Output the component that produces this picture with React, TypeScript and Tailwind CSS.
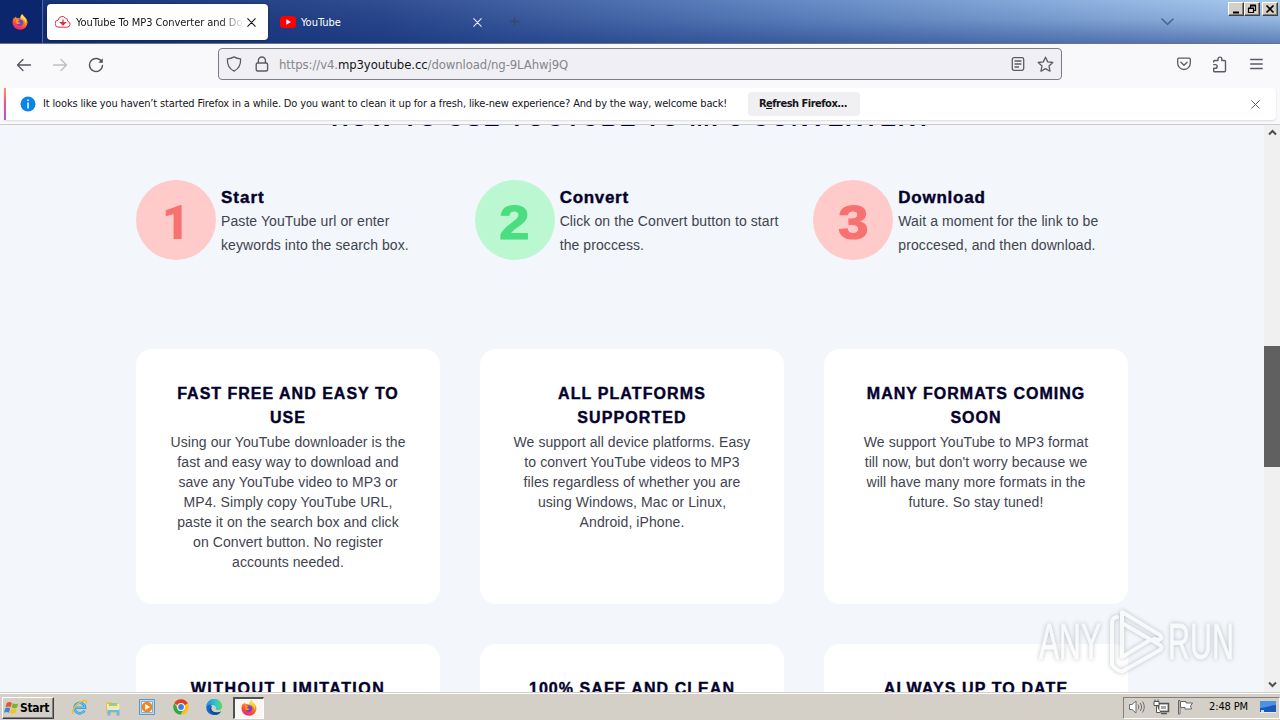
import type { ReactNode } from "react";

const UI = "font-['DejaVu_Sans_Condensed','DejaVu_Sans',sans-serif]";

function FirefoxLogo({ id, size }: { id: string; size: number }) {
  return (
    <svg width={size} height={size} viewBox="0 0 16 16">
      <defs>
        <linearGradient id={id} x1="0.8" y1="0" x2="0.3" y2="1">
          <stop offset="0" stopColor="#ffe14a" />
          <stop offset="0.4" stopColor="#ff8a1e" />
          <stop offset="0.75" stopColor="#ff4040" />
          <stop offset="1" stopColor="#e0208a" />
        </linearGradient>
      </defs>
      <path d="M10.2.3c.6 1.3 1.600 1.900 2.700 2.900 1.400 1.200 2.600 2.900 2.600 5.300A7.500 7.300 0 0 1 .5 8.600C.5 6.500 1 4.900 2.200 3.300l.5 1.100 1-1.900 1.200 1.700c1.500-.3 2.700-.1 3.500.4C8.300 2.700 9 1.200 10.200.3z" fill={`url(#${id})`} />
      <path d="M4.800 5.900c1.500-1.100 4.500-.8 6.100.9 1 1.600.5 4.200-1.400 5-2 .8-4.200-.1-4.800-1.900 1 .6 2 .4 2.900-.3-1.300-.2-2.500-.8-2.500-1.700.4-.5 1.200-.6 2-.6-.4-.8-1.200-1.300-2.300-1.400z" fill="#7a3fd0" />
      <path d="M4.300 5.500c1.300-.4 2.700.3 3.200 1.300-.8.200-1.700.3-2 .9.500.7 1.900.6 3 1-.8 1.400-2.500 1.800-3.900 1-.6-1.200-.8-2.900-.3-4.200z" fill="#ff9a22" />
      <path d="M10.200.3c.6 1.500 3 2.900 3.700 5.200.4 1.500.2 3-.2 4C13.700 6.800 12 5 8.600 4.200 8.600 2.600 9 1.200 10.200.3z" fill="#ffdd3c" />
    </svg>
  );
}

function Close({ color, size = 9, w = 1.2 }: { color: string; size?: number; w?: number }) {
  return (
    <svg width={size} height={size} viewBox="0 0 10 10" stroke={color} strokeWidth={w} strokeLinecap="round">
      <path d="M.8.8l8.400 8.400M9.200.8L.8 9.200" />
    </svg>
  );
}

function WinButton({ children, className = "" }: { children: ReactNode; className?: string }) {
  return (
    <div className={`flex h-[14px] w-4 items-center justify-center border border-t-white border-l-white border-r-[#404040] border-b-[#404040] bg-[#d4d0c8] shadow-[inset_-1px_-1px_0_#808080] ${className}`}>
      {children}
    </div>
  );
}

function TitleBar() {
  return (
    <div className="flex h-11 shrink-0 border-b border-[#6a7287] bg-[linear-gradient(to_bottom,rgba(255,255,255,0.03),rgba(20,40,110,0.12)_45%,rgba(15,45,120,0.48)),linear-gradient(to_right,#0d2a72,#2a488e_30%,#6086c2_62%,#a6caf0)]">
      <div className="flex w-[43px] items-center border-r border-[#5168a0] bg-[#0b266c] pl-3">
        <FirefoxLogo id="ff-title" size={16} />
      </div>
      <div className="mt-1 ml-1 flex h-9 w-[221px] items-center rounded-[4px] bg-white pr-[11px] pl-2 shadow-[0_0_3px_rgba(0,0,0,0.4)]">
        <svg width="16" height="14" viewBox="0 0 16 14" fill="none" stroke="#d9303e" strokeWidth="1">
          <path d="M4 12.200h8.200a3 3 0 0 0 .6-5.900 3.100 3.100 0 0 0-2.300-3.200A4 4 0 0 0 3.300 5 3.600 3.600 0 0 0 4 12.200z" />
          <path d="M8 4.500v5M5.800 7.700L8 9.900l2.200-2.200z" fill="#d9303e" strokeWidth="1.300" />
        </svg>
        <div className={`mt-[3px] ml-[5px] w-[168px] overflow-hidden text-[11px] tracking-[-0.06px] whitespace-nowrap text-[#15141a] [mask-image:linear-gradient(to_right,#000_86%,transparent)] ${UI}`}>
          YouTube To MP3 Converter and Download
        </div>
        <div className="ml-[3px] shrink-0">
          <Close color="#15141a" />
        </div>
      </div>
      <div className="flex h-11 w-[214px] items-center pl-3">
        <svg width="16" height="12" viewBox="0 0 16 12">
          <rect width="16" height="12" rx="3.500" fill="#f00" />
          <path d="M6.300 3.300v5.400L11 6z" fill="#fff" />
        </svg>
        <div className={`mt-[3px] ml-[5px] flex-1 text-[11px] text-white ${UI}`}>YouTube</div>
        <Close color="#e8ecf6" size={9} />
      </div>
      <div className="flex flex-1 items-center pl-[27px]">
        <svg width="11" height="11" viewBox="0 0 11 11" stroke="#38476f" strokeWidth="1.300">
          <path d="M5.500 1v9M1 5.500h9" />
        </svg>
        <svg className="ml-[641px]" width="13" height="8" viewBox="0 0 13 8" fill="none" stroke="#4b668f" strokeWidth="1.600" strokeLinecap="round">
          <path d="M1 1l5.500 5.300L12 1" />
        </svg>
      </div>
      <div className="flex pt-0.5 pr-0.5">
        <WinButton>
          <svg width="10" height="10" viewBox="0 0 10 10"><path d="M2 7.500h6v2H2z" /></svg>
        </WinButton>
        <WinButton>
          <svg width="10" height="10" viewBox="0 0 10 10" fill="none" stroke="#000">
            <path d="M3 1h6M3 1.800h5.500v4.700H7M3.500 2v2M1 4h6M1.500 4.500h5v4h-5z" strokeWidth="1.200" />
          </svg>
        </WinButton>
        <WinButton className="ml-[2px]">
          <svg width="10" height="10" viewBox="0 0 10 10" stroke="#000" strokeWidth="1.700"><path d="M1.500 1.500l7 7M8.500 1.500l-7 7" /></svg>
        </WinButton>
      </div>
    </div>
  );
}

function NavBar() {
  return (
    <div className="flex h-11 shrink-0 items-center bg-[#f9f9fb] pb-1 text-[#5b5b66]">
      <svg className="mt-px ml-4" width="16" height="16" viewBox="0 0 16 16" fill="none" stroke="#55555f" strokeWidth="1.300" strokeLinecap="round" strokeLinejoin="round">
        <path d="M14.500 8H1.500M7 2.500L1.500 8 7 13.500" />
      </svg>
      <svg className="mt-px ml-5" width="16" height="16" viewBox="0 0 16 16" fill="none" stroke="#bdbdc4" strokeWidth="1.300" strokeLinecap="round" strokeLinejoin="round">
        <path d="M1.500 8h13M9 2.500L14.500 8 9 13.500" />
      </svg>
      <svg className="mt-px ml-5" width="16" height="16" viewBox="0 0 16 16" fill="none" stroke="#55555f" strokeWidth="1.400" strokeLinecap="round">
        <path d="M13.800 5A6.500 6.500 0 1 0 14.500 8.500" />
        <path d="M14.800 1.300v4.500h-4.500z" fill="#55555f" stroke="none" />
      </svg>
      <div className="ml-[114px] flex h-8 w-[844px] items-center rounded-[4px] border border-[#7d7d88] bg-[#f0f0f4] pl-[7px]">
        <svg width="16" height="16" viewBox="0 0 16 16" fill="none" stroke="#5b5b66" strokeWidth="1.300" strokeLinejoin="round">
          <path d="M8 .9c2.200 1.300 4.300 1.800 6.600 2 .3 5.400-1.700 9.800-6.600 12.200C3.100 12.700 1.100 8.300 1.400 2.900 3.700 2.700 5.800 2.200 8 .9z" />
        </svg>
        <svg className="ml-3" width="16" height="16" viewBox="0 0 16 16" fill="none" stroke="#5b5b66" strokeWidth="1.400">
          <rect x="2.200" y="7" width="11.400" height="8" rx="1.500" />
          <path d="M4.400 7V4.500a3.500 3.500 0 0 1 7 0V7" />
        </svg>
        <div className={`mt-px ml-[9px] flex-1 text-[13px] leading-4 tracking-[-0.1px] whitespace-nowrap text-[#85858c] ${UI}`}>
          https://v4.<span className="text-[#15141a]">mp3youtube.cc</span>/download/ng-9LAhwj9Q
        </div>
        <svg width="14" height="16" viewBox="0 0 14 16" fill="none" stroke="#5b5b66" strokeWidth="1.300" strokeLinecap="round">
          <rect x="1.300" y="1.600" width="11.400" height="12.800" rx="1.800" />
          <path d="M4 5h6M4 8h6M4 11h3.500" />
        </svg>
        <svg className="mr-[7px] ml-3" width="17" height="17" viewBox="0 0 17 17" fill="none" stroke="#5b5b66" strokeWidth="1.300" strokeLinejoin="round">
          <path d="M8.500 1.200l2.200 4.700 5.100.6-3.800 3.500 1 5.200-4.500-2.600L4 15.200l1-5.200-3.800-3.500 5.100-.6z" />
        </svg>
      </div>
      <svg className="ml-[115px]" width="14" height="14" viewBox="0 0 14 14" fill="none" stroke="#5b5b66" strokeWidth="1.300" strokeLinecap="round" strokeLinejoin="round">
        <path d="M1.700 1.200h10.600a1 1 0 0 1 1 1v4a6.300 6.300 0 0 1-12.600 0v-4a1 1 0 0 1 1-1z" />
        <path d="M3.900 5.300L7 8.300l3.100-3" />
      </svg>
      <svg className="ml-[21px]" width="16" height="17" viewBox="0 0 16 17" fill="none" stroke="#5b5b66" strokeWidth="1.400" strokeLinejoin="round">
        <path d="M1.700 6.600V5.500a1 1 0 0 1 1-1H6V3a1.900 1.900 0 0 1 3.800 0v1.500h2.700a1 1 0 0 1 1 1v9.300a1 1 0 0 1-1 1H2.700a1 1 0 0 1-1-1V12.300h1.600a1.800 1.800 0 0 0 0-3.700H1.200" />
      </svg>
      <svg className="ml-[22px]" width="13" height="12" viewBox="0 0 13 12" stroke="#5b5b66" strokeWidth="1.300" strokeLinecap="round">
        <path d="M.7 1.500h11.600M.7 6h11.600M.7 10.500h11.600" />
      </svg>
    </div>
  );
}

function InfoBar() {
  return (
    <div className="h-[37px] shrink-0 border-b border-[#cccccf] bg-[#f9f9fb] pr-1 pl-1">
      <div className="flex h-8 items-center rounded-r-[4px] bg-white shadow-[0_1px_2px_rgba(0,0,0,0.12)]">
        <div className="h-8 w-0.5 bg-[linear-gradient(to_bottom,#f59a5c,#e8508c_50%,#a45bd8)]" />
        <svg className="ml-[14px]" width="16" height="16" viewBox="0 0 16 16">
          <circle cx="8" cy="8" r="7.500" fill="#0a84e8" />
          <path d="M7.300 3.500h1.500V5H7.300zM7.300 6.500h1.500v6H7.300z" fill="#fff" />
        </svg>
        <div className={`ml-[7px] w-[705px] text-[11px] tracking-[-0.148px] whitespace-nowrap text-[#15141a] ${UI}`}>
          It looks like you haven’t started Firefox in a while. Do you want to clean it up for a fresh, like-new experience? And by the way, welcome back!
        </div>
        <div className={`flex h-6 w-28 items-center justify-center rounded-[4px] bg-[#f0f0f2] pr-0.5 text-[11px] font-bold tracking-[-0.5px] whitespace-nowrap text-[#15141a] ${UI}`}>
          <span>R<span className="underline">e</span>fresh Firefox...</span>
        </div>
        <div className="mr-[16px] ml-auto">
          <Close color="#5b5b66" size={9} w={1.1} />
        </div>
      </div>
    </div>
  );
}

const steps = [
  { n: "1", title: "Start", track: "tracking-[1px]", lines: ["Paste YouTube url or enter", "keywords into the search box."], circle: "bg-[#fecaca]", digit: "text-[#f87171]", face: "font-['Roboto'] font-black" },
  { n: "2", title: "Convert", track: "tracking-[0.7px]", lines: ["Click on the Convert button to start", "the proccess."], circle: "bg-[#bbf7d0]", digit: "text-[#4ade80]", face: "font-bold scale-x-[1.13] [-webkit-text-stroke:1.2px_currentColor]" },
  { n: "3", title: "Download", track: "tracking-[0.75px]", lines: ["Wait a moment for the link to be", "proccesed, and then download."], circle: "bg-[#fecaca]", digit: "text-[#f87171]", face: "font-bold scale-x-[1.13] [-webkit-text-stroke:1.2px_currentColor]" },
];

const cards = [
  { title: ["FAST FREE AND EASY TO", "USE"], track: "tracking-[1px]", body: ["Using our YouTube downloader is the", "fast and easy way to download and", "save any YouTube video to MP3 or", "MP4. Simply copy YouTube URL,", "paste it on the search box and click", "on Convert button. No register", "accounts needed."] },
  { title: ["ALL PLATFORMS", "SUPPORTED"], track: "tracking-[1.1px]", body: ["We support all device platforms. Easy", "to convert YouTube videos to MP3", "files regardless of whether you are", "using Windows, Mac or Linux,", "Android, iPhone."] },
  { title: ["MANY FORMATS COMING", "SOON"], track: "tracking-[1px]", body: ["We support YouTube to MP3 format", "till now, but don't worry because we", "will have many more formats in the", "future. So stay tuned!"] },
  { title: ["WITHOUT LIMITATION"], track: "tracking-[1.45px]", body: [] },
  { title: ["100% SAFE AND CLEAN"], track: "tracking-[1.05px]", body: [] },
  { title: ["ALWAYS UP TO DATE"], track: "tracking-[1.1px]", body: [] },
];

function Page() {
  return (
    <div className="flex min-h-0 flex-1">
      <div className="flex-1 overflow-hidden bg-[#f3f6fa] px-[136px] font-['Liberation_Sans',Arial,sans-serif]">
        <h2 className="-mt-[23px] h-[78px] text-center text-[24px] leading-8 font-bold tracking-[1.56px] whitespace-nowrap text-[#03012c]">
          HOW TO USE YOUTUBE TO MP3 CONVERTER?
        </h2>
        <div className="grid grid-cols-3 gap-6">
          {steps.map((s) => (
            <div key={s.n} className="flex h-20 gap-[5px]">
              <div className={`flex size-20 shrink-0 items-center justify-center rounded-full pt-1.5 text-[48px] leading-none ${s.circle} ${s.digit}`}>
                <span className={`inline-block ${s.face}`}>{s.n}</span>
              </div>
              <div className="pt-[5px] whitespace-nowrap">
                <h3 className={`h-6 text-[17px] leading-[25px] font-bold text-[#03012c] [-webkit-text-stroke:0.4px_currentColor] ${s.track}`}>{s.title}</h3>
                {s.lines.map((l) => (
                  <p key={l} className="text-sm leading-6 tracking-[0.09px] text-[#3f4450]">{l}</p>
                ))}
              </div>
            </div>
          ))}
        </div>
        <div className="mt-[89px] grid grid-cols-3 gap-10">
          {cards.map((c) => (
            <div key={c.title[0]} className="h-[255px] rounded-2xl bg-white pt-[33px] text-center whitespace-nowrap">
              <h3 className={`mb-[2px] text-base leading-6 font-bold text-[#03012c] [-webkit-text-stroke:0.4px_currentColor] ${c.track}`}>
                {c.title.map((t) => (
                  <span key={t} className="block">{t}</span>
                ))}
              </h3>
              {c.body.map((l) => (
                <p key={l} className="text-sm leading-5 tracking-[0.08px] text-[#3f4450]">{l}</p>
              ))}
            </div>
          ))}
        </div>
      </div>
      <div className="flex w-4 flex-col items-center bg-[#f0f0f0]">
        <svg className="mt-1 h-[7px]" width="9" height="7" viewBox="0 0 9 7" fill="none" stroke="#505050" strokeWidth="2"><path d="M1 5.500L4.500 2 8 5.500" /></svg>
        <div className="mt-[210px] h-[121px] w-4 bg-[#606060]" />
        <svg className="mt-auto mb-1" width="9" height="7" viewBox="0 0 9 7" fill="none" stroke="#505050" strokeWidth="2"><path d="M1 1.500L4.500 5 8 1.500" /></svg>
      </div>
    </div>
  );
}

function Taskbar() {
  return (
    <div className={`flex h-7 shrink-0 items-center border-t border-[#d4d0c8] bg-[#d4d0c8] shadow-[inset_0_1px_0_#fff] ${UI}`}>
      <div className="mt-0.5 ml-0.5 flex h-[22px] w-[52px] items-center border border-t-white border-l-white border-r-[#404040] border-b-[#404040] pl-px shadow-[inset_-1px_-1px_0_#808080]">
        <svg className="shrink-0" width="16" height="16" viewBox="0 0 17 16">
          <path d="M3 2.500c2-1.300 3.700-1 5.400.1L7 7.300C5.300 6.300 3.600 6.200 1.600 7.300z" fill="#e8542a" />
          <path d="M9.300 3c1.900 1.100 3.800 1.200 6-.1L13.900 7.500c-2 1.200-4 1.200-5.900.1z" fill="#76b82a" />
          <path d="M1.300 8.300c2-1.200 3.700-1 5.400 0l-1.400 4.700c-1.700-1-3.400-1-5.300.1z" fill="#3a86d8" />
          <path d="M7.700 8.700c1.900 1.100 3.900 1.100 5.900 0l-1.400 4.600c-2 1.100-4 1.100-5.900 0z" fill="#f8c11c" />
        </svg>
        <span className="text-[12px] font-bold tracking-[-0.3px] text-black">Start</span>
      </div>
      <svg className="mt-0.5 ml-[17px]" width="17" height="17" viewBox="0 0 17 17" fill="none">
        <path d="M13.500 11.500a5.300 5.300 0 1 1 .6-2.800H4.500" stroke="#2f9fe0" strokeWidth="2.600" />
        <path d="M13.500 11.500a5.300 5.300 0 1 1 .6-2.800H4.500" stroke="#8fd4f6" strokeWidth=".8" />
        <path d="M2.500 15C-1 13 5 5 11 2.200c4-1.700 5.300-.4 4.300 2.300" stroke="#f0bd2c" strokeWidth="1.400" />
      </svg>
      <svg className="mt-0.5 ml-[17px]" width="16" height="16" viewBox="0 0 16 16">
        <path d="M1 2h5l1.500 1.500H14V13H1z" fill="#e4c45c" />
        <path d="M2 4h12.500v8H2z" fill="#f8e8a0" />
        <path d="M4 3h8v3H4z" fill="#9cc98c" />
        <path d="M2.500 9h12v6.500h-3V12h-6v3.500h-3z" fill="#6fb8e0" />
        <path d="M3 9.500h11" stroke="#d4f0ff" />
      </svg>
      <svg className="ml-[18px]" width="16" height="16" viewBox="0 0 16 16">
        <path d="M.5.5h15v15H.5z" fill="#c0dcf2" stroke="#5f94c8" />
        <path d="M2.500 2.500h11v11h-11z" fill="#e9f4fc" stroke="#82acd4" />
        <circle cx="8" cy="8" r="5.300" fill="#f08519" />
        <path d="M6.200 5v6l5-3z" fill="#fff" />
      </svg>
      <svg className="ml-[18px]" width="16" height="16" viewBox="0 0 16 16">
        <circle cx="8" cy="8" r="7.700" fill="#fbc116" />
        <path d="M8 8L1.300 4.200A7.700 7.700 0 0 1 14.700 4.200z" fill="#e33b2e" />
        <path d="M1.300 4.200A7.700 7.700 0 0 0 7.500 15.700L11 9.700 5 9.700z" fill="#2da94f" />
        <path d="M8 4.200h6.700L8 8z" fill="#e33b2e" />
        <circle cx="8" cy="8" r="3.900" fill="#fff" />
        <circle cx="8" cy="8" r="2.900" fill="#3f7fe8" />
      </svg>
      <svg className="ml-[17px]" width="17" height="16" viewBox="0 0 17 16">
        <defs>
          <linearGradient id="edge-top" x1="0" x2="1">
            <stop offset="0" stopColor="#1e8fe0" />
            <stop offset=".6" stopColor="#33c6c8" />
            <stop offset="1" stopColor="#62d95a" />
          </linearGradient>
        </defs>
        <path d="M.3 8A8 8 0 0 1 16.300 7.500c0 2.300-1.800 3.700-4 3.700-1.600 0-3-.6-2.500-1.500C10.500 8.300 9 6 6.300 6 3.300 6 .8 7 .3 8z" fill="url(#edge-top)" />
        <path d="M.3 8C1 6.300 3.300 5.300 6 5.600 4.300 7 4.300 9.600 5.600 11.500c2.200 2.500 6 2.600 9.500.9A8 8 0 0 1 .3 8z" fill="#1667c0" />
        <path d="M6.500 6.500C4.800 8 5 10.500 6.500 12c2 1.800 5.500 1.800 8.500.5-2 3.300-7 4-9.500 1.200C3 11.500 3.500 7.500 6.500 6.500z" fill="#114a92" />
      </svg>
      <div className="mt-0.5 ml-[10px] flex h-[22px] w-[31px] items-center justify-center border-t-2 border-l-2 border-r border-b border-t-[#505050] border-l-[#505050] border-r-white border-b-white bg-[#f8f7f5] pr-px pb-px">
        <FirefoxLogo id="ff-task" size={16} />
      </div>
      <div className="mt-0.5 ml-auto flex h-[22px] w-[157px] items-center border border-t-[#808080] border-l-[#808080] border-r-white border-b-white pb-0.5 pl-1">
        <svg className="shrink-0" width="18" height="16" viewBox="0 0 17 16" fill="none" stroke="#6e6e6e">
          <path d="M1 5.500h2.500L7.500 2v12l-4-3.500H1z" fill="#fff" />
          <path d="M9.500 5.500c1 1.500 1 3.500 0 5M11.800 4c1.700 2.500 1.700 5.500 0 8M14 2.500c2.300 3.300 2.300 7.700 0 11" />
        </svg>
        <svg className="ml-[7px] shrink-0" width="17" height="16" viewBox="0 0 17 16" fill="none" stroke="#555">
          <path d="M5.500 4.500h10v8h-10z" fill="#ddd" strokeWidth="1.500" />
          <path d="M7.500 6.500h6v4h-6z" fill="#a8a8a8" stroke="#fff" />
          <path d="M8 14.500h6" strokeWidth="1.500" />
          <path d="M1 2.500h5v4H1zM2 .5v2M5 .5v2M3.500 7v6.500h4" fill="#fff" />
        </svg>
        <svg className="ml-[7px] shrink-0" width="17" height="16" viewBox="0 0 17 16" fill="#fff" stroke="#666">
          <path d="M1.500 1.500h1.500v13.500H1.500z" />
          <path d="M3.500 2.500h5.500v1.500h6.500l-2 3 1 3H8V8.500H3.500z" />
        </svg>
        <span className="mt-0.5 ml-[15px] w-[40px] text-[11px] tracking-[-0.124px] whitespace-nowrap text-black">2:48 PM</span>
        <svg className="ml-[11px] shrink-0" width="16" height="14" viewBox="0 0 16 14">
          <path d="M0 1h16v11H0z" fill="#1c58b8" />
          <path d="M0 1h16v4C10 5 6 8 0 8z" fill="#4c92e4" />
          <path d="M0 12h16v1H0z" fill="#e8eef8" />
          <path d="M1 10h3v2H1z" fill="#bfe0ff" />
        </svg>
      </div>
    </div>
  );
}

function Watermark() {
  return (
    <svg className="pointer-events-none absolute top-[604px] left-[1030px] [filter:drop-shadow(0_0_2px_rgba(110,115,125,0.6))]" width="212" height="74" viewBox="0 0 212 74" fill="none" opacity="0.72">
      <g fill="#fafbfc" stroke="#fafbfc" strokeWidth="0.8" fontFamily="Liberation Sans" fontSize="50">
        <text x="9" y="55" textLength="62" lengthAdjust="spacingAndGlyphs">ANY</text>
        <text x="138" y="55" textLength="66" lengthAdjust="spacingAndGlyphs">RUN</text>
      </g>
      <g stroke="#fafbfc" strokeWidth="4" strokeLinejoin="round" strokeLinecap="round">
        <path d="M82 60V18q0-4 5-5M92 53V8l38 23q3 3-1 5l-5-1M92 19l38 22q3 3 0 5L93 67q-5 1-11-6M92 53l28-17" />
      </g>
    </svg>
  );
}

export default function App() {
  return (
    <div className="relative flex h-[720px] w-[1280px] flex-col overflow-hidden">
      <TitleBar />
      <NavBar />
      <InfoBar />
      <Page />
      <Taskbar />
      <Watermark />
    </div>
  );
}
